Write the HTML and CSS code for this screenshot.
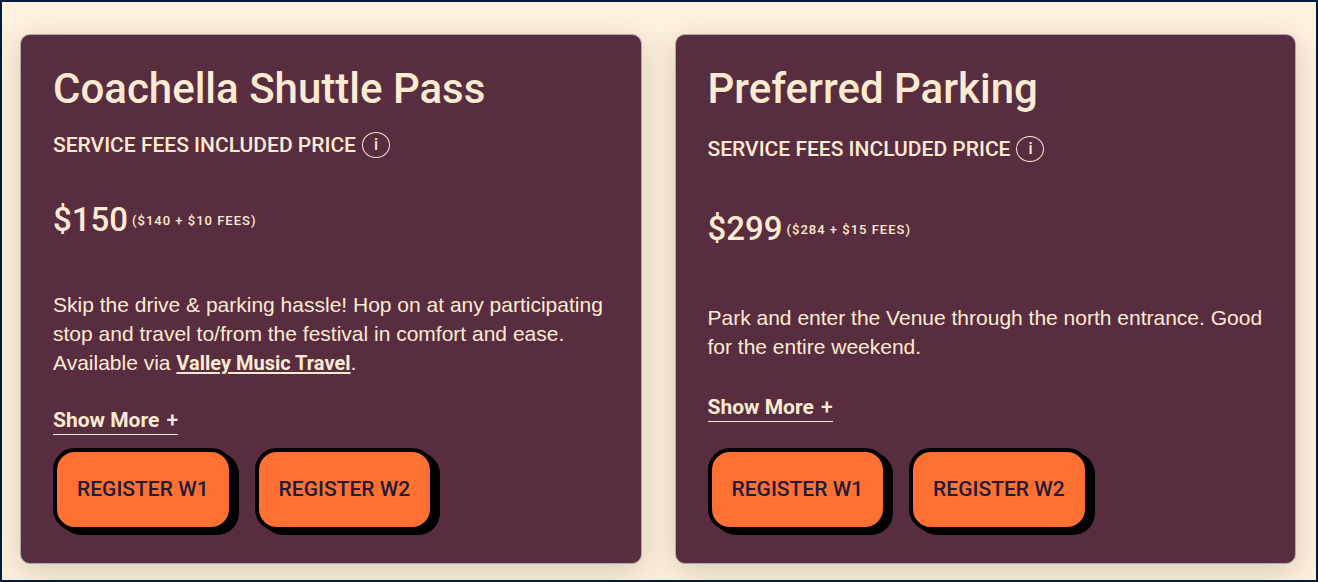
FILE: index.html
```html
<!DOCTYPE html>
<html lang="en">
<head>
<meta charset="utf-8">
<meta name="viewport" content="width=device-width, initial-scale=1">
<title>Travel Passes</title>
<link rel="stylesheet" href="styles.css">
</head>
<body>
<main class="passes">
  <article class="card">
    <h2 class="card-title">Coachella Shuttle Pass</h2>
    <p class="fees-label">SERVICE FEES INCLUDED PRICE <button class="info" type="button" aria-label="About service fees">i</button></p>
    <p class="price">$150 <span class="breakdown">($140 + $10 FEES)</span></p>
    <p class="description">Skip the drive &amp; parking hassle! Hop on at any participating stop and travel to/from the festival in comfort and ease. Available via <a class="partner" href="#travel">Valley Music Travel</a>.</p>
    <div class="more-row"><button class="more" type="button">Show More <span class="plus">+</span></button></div>
    <div class="actions">
      <button class="register" type="button">REGISTER W1</button>
      <button class="register" type="button">REGISTER W2</button>
    </div>
  </article>
  <article class="card">
    <h2 class="card-title">Preferred Parking</h2>
    <p class="fees-label">SERVICE FEES INCLUDED PRICE <button class="info" type="button" aria-label="About service fees">i</button></p>
    <p class="price">$299 <span class="breakdown">($284 + $15 FEES)</span></p>
    <p class="description">Park and enter the Venue through the north entrance. Good for the entire weekend.</p>
    <div class="more-row"><button class="more" type="button">Show More <span class="plus">+</span></button></div>
    <div class="actions">
      <button class="register" type="button">REGISTER W1</button>
      <button class="register" type="button">REGISTER W2</button>
    </div>
  </article>
</main>
</body>
</html>
```
FILE: styles.css
```css
* {
  box-sizing: border-box;
}

body {
  margin: 0;
  background: #fff1df;
  color: #ffebd2;
  font-family: Roboto, "Liberation Sans", sans-serif;
}

button {
  font-family: inherit;
  color: inherit;
  cursor: pointer;
}

.passes {
  display: grid;
  grid-template-columns: 1fr 1fr;
  gap: 33px;
  min-height: 100vh;
  padding: 32px 20px 16px 18px;
  border: 2px solid #001d3d;
}

.card {
  display: flex;
  flex-direction: column;
  padding: 28px 30px 32px 32px;
  border: 1px solid #b0a6ad;
  border-radius: 10px;
  background: #582d40;
  box-shadow: 0 8px 32px rgba(50, 50, 10, 0.2);
}

.card-title {
  flex: 1 0 auto;
  margin: 0;
  font-size: 42px;
  font-weight: 500;
  line-height: 52px;
}

.fees-label {
  display: flex;
  flex: 1 0 auto;
  align-items: flex-start;
  gap: 6px;
  margin: 17px 0 0;
  font-size: 21px;
  font-weight: 500;
  line-height: 26px;
}

.info {
  width: 28px;
  height: 26px;
  padding: 0;
  border: 1px solid currentColor;
  border-radius: 50%;
  background: none;
  font-size: 16px;
  font-weight: 500;
  line-height: 24px;
}

.price {
  display: flex;
  flex: 1 0 auto;
  align-items: flex-start;
  gap: 4px;
  margin: 41px 0 0;
  font-size: 33px;
  font-weight: 500;
  line-height: 42px;
}

.breakdown {
  font-size: 13px;
  letter-spacing: 1px;
  line-height: 44px;
}

.description {
  flex: 1 0 auto;
  margin: 47px 0 0;
  font-family: "Liberation Sans", sans-serif;
  font-size: 21px;
  line-height: 29px;
}

.partner {
  color: inherit;
  font-family: Roboto, sans-serif;
  font-size: 20px;
  font-weight: 700;
  text-decoration-thickness: 2px;
  text-underline-offset: 2px;
}

.more-row {
  display: flex;
  flex: 3 0 auto;
  align-items: flex-start;
  margin-top: 28px;
}

.more {
  padding: 0;
  border: 0;
  border-bottom: 1px solid currentColor;
  background: none;
  font-size: 21px;
  font-weight: 700;
  line-height: 28px;
}

.plus {
  margin-left: 2px;
  font-weight: 500;
}

.actions {
  display: flex;
  flex-wrap: wrap;
  gap: 22px;
  margin-top: 13px;
}

.register {
  padding: 22px 20px;
  border: 4px solid #000;
  border-radius: 22px;
  background: #ff7033;
  box-shadow: 6px 4px 0 #000;
  color: #221b35;
  font-size: 21px;
  font-weight: 500;
  line-height: 31px;
}

@media (max-width: 800px) {
  .passes {
    grid-template-columns: 1fr;
  }
}
```
